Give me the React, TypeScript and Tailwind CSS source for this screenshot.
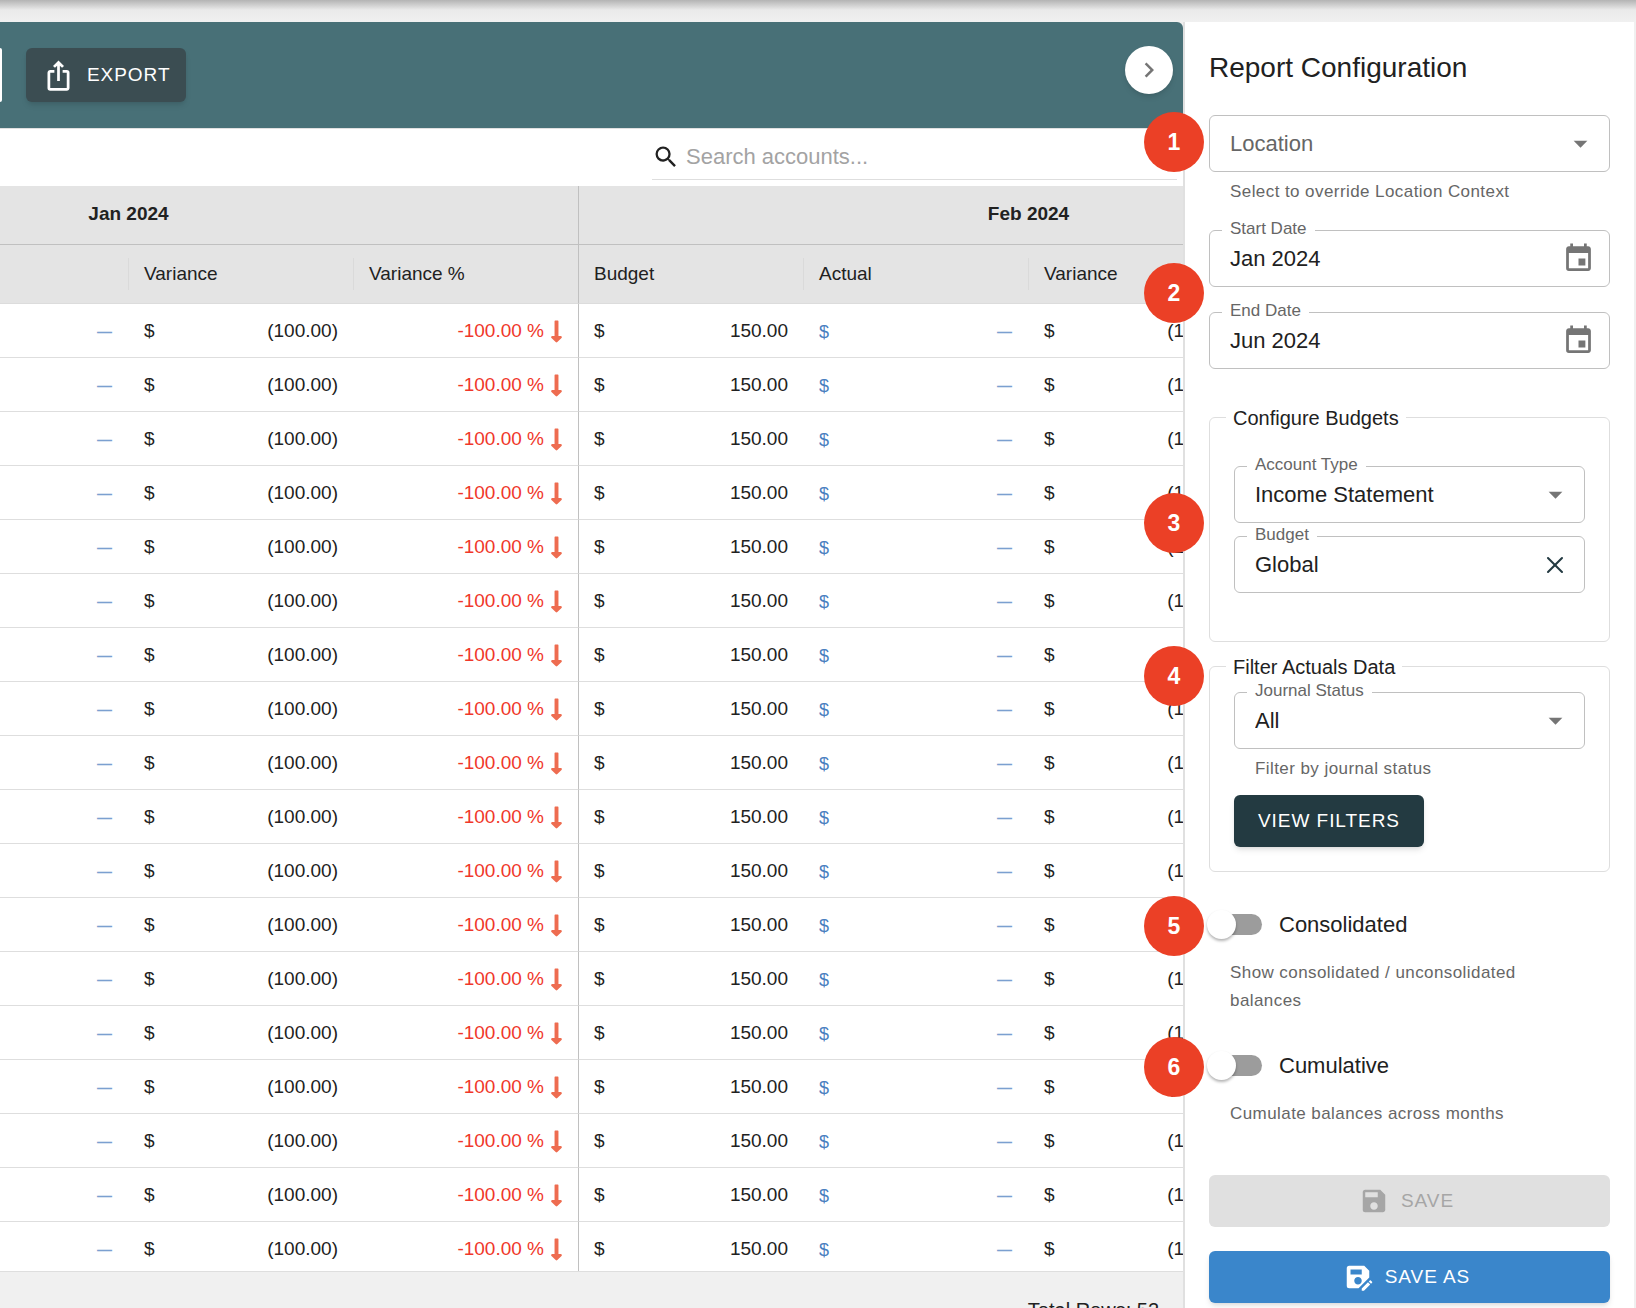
import { useState, type ReactNode } from 'react';
import { FaLongArrowAltDown } from 'react-icons/fa';
import {
  MdArrowDropDown,
  MdChevronRight,
  MdEvent,
  MdIosShare,
  MdSave,
  MdSaveAs,
  MdSearch,
} from 'react-icons/md';
import { X } from 'lucide-react';

const months = ['Jan 2024', 'Feb 2024'];
const columns = ['Budget', 'Actual', 'Variance', 'Variance %'];

const rows = Array.from({ length: 18 }, () => [
  { budget: '100.00', variance: '(100.00)', percent: '-100.00 %' },
  { budget: '150.00', variance: '(150.00)', percent: '-100.00 %' },
]);

function Money({ value }: { value: string }) {
  return (
    <div className="flex justify-between">
      <span>$</span>
      <span>{value}</span>
    </div>
  );
}

function Badge({ n, className }: { n: number; className: string }) {
  return (
    <span
      className={`absolute -left-[65px] z-10 flex size-[60px] items-center justify-center rounded-full bg-[#eb4026] text-[23px] font-bold text-white ${className}`}
    >
      {n}
    </span>
  );
}

function Outlined({ id, label, children }: { id: string; label?: string; children: ReactNode }) {
  return (
    <div className="relative flex h-[57px] items-center rounded-md border border-[#c0c0c0]">
      {label && (
        <label
          htmlFor={id}
          className="absolute -top-3 left-3 bg-white px-2 text-[17px] leading-5 text-[#666]"
        >
          {label}
        </label>
      )}
      {children}
    </div>
  );
}

function SelectField({ id, label, options, muted }: { id: string; label?: string; options: string[]; muted?: boolean }) {
  return (
    <Outlined id={id} label={label}>
      <select
        id={id}
        aria-label={label ? undefined : options[0]}
        className={`h-full w-full appearance-none bg-transparent pr-12 pl-5 text-[22px] outline-none ${
          muted ? 'text-[#666]' : 'text-[#212121]'
        }`}
      >
        {options.map((option) => (
          <option key={option}>{option}</option>
        ))}
      </select>
      <MdArrowDropDown className="pointer-events-none absolute right-3 size-[33px] text-[#757575]" />
    </Outlined>
  );
}

function DateField({ id, label, value }: { id: string; label: string; value: string }) {
  return (
    <Outlined id={id} label={label}>
      <input
        id={id}
        defaultValue={value}
        className="h-full min-w-0 flex-1 bg-transparent pl-5 text-[22px] outline-none"
      />
      <button type="button" aria-label={`Choose ${label}`} className="pr-3.5 text-[#757575]">
        <MdEvent className="size-[33px]" />
      </button>
    </Outlined>
  );
}

function Helper({ children }: { children: ReactNode }) {
  return <p className="mt-1.5 pr-10 pl-[21px] text-[17px] leading-7 tracking-wide text-[#666]">{children}</p>;
}

function Group({ title, children }: { title: string; children: ReactNode }) {
  return (
    <fieldset className="min-w-0 rounded-md border border-[#dedede]">
      <legend className="ml-4 px-[7px] pt-0.5 text-xl leading-[26px]">{title}</legend>
      {children}
    </fieldset>
  );
}

function Toggle({ id, label }: { id: string; label: string }) {
  const [on, setOn] = useState(false);

  return (
    <div className="flex h-[57px] items-center gap-[17px] pl-0.5">
      <input
        id={id}
        type="checkbox"
        role="switch"
        checked={on}
        onChange={() => setOn(!on)}
        className="relative h-[21px] w-[51px] shrink-0 appearance-none rounded-full bg-[#9c9c9c] before:absolute before:-top-1 before:-left-1 before:size-[29px] before:rounded-full before:bg-white before:shadow-[0_2px_3px_rgba(0,0,0,0.3)] checked:bg-[#3a86cb] checked:before:left-[26px]"
      />
      <label htmlFor={id} className="text-[22px]">
        {label}
      </label>
    </div>
  );
}

function ReportTable() {
  return (
    <table className="-ml-[321px] w-[1800px] table-fixed border-separate border-spacing-0 text-[19px]">
      <thead className="bg-[#e4e4e4]">
        <tr>
          {months.map((month) => (
            <th key={month} colSpan={4} className="h-[59px] border-r border-b border-[#c0c0c0] pb-0.5 font-bold">
              {month}
            </th>
          ))}
        </tr>
        <tr>
          {months.map((month) =>
            columns.map((column, i) => (
              <th
                key={month + column}
                className={`h-[59px] border-b border-b-[#dcdcdc] p-0 text-left font-normal ${
                  i === 3 ? 'border-r border-r-[#c0c0c0]' : ''
                }`}
              >
                <div
                  className={`flex h-8 items-center px-[15px] ${i === 3 ? '' : 'border-r border-[#dadada]'}`}
                >
                  {column}
                </div>
              </th>
            ))
          )}
        </tr>
      </thead>
      <tbody>
        {rows.map((row, r) => (
          <tr key={r}>
            {row.map((cell, m) => [
              <td key={`budget-${m}`} className="h-[54px] border-b border-[#dedede] pt-0.5 pr-4 pl-[15px]">
                <Money value={cell.budget} />
              </td>,
              <td key={`actual-${m}`} className="border-b border-[#dedede] pt-0.5 pr-[17px] pl-[15px]">
                <a href="#actual" className="flex items-center justify-between text-lg text-[#4a80bf]">
                  <span>$</span>
                  <span className="text-[15px] font-bold text-[#7ba0d0]">—</span>
                </a>
              </td>,
              <td key={`variance-${m}`} className="border-b border-[#dedede] pt-0.5 pr-4 pl-[15px]">
                <Money value={cell.variance} />
              </td>,
              <td
                key={`percent-${m}`}
                className="border-r border-b border-r-[#c0c0c0] border-b-[#dedede] px-[15px] pt-0.5 text-[#f0372a]"
              >
                <div className="flex items-center justify-end gap-1.5">
                  {cell.percent}
                  <FaLongArrowAltDown className="h-[25px] w-[13px] text-[#ee6c50]" />
                </div>
              </td>,
            ])}
          </tr>
        ))}
      </tbody>
    </table>
  );
}

export default function App() {
  return (
    <div className="flex h-screen flex-col overflow-hidden bg-[#f0f0f0] pr-0.5 font-['Liberation_Sans',Arial,sans-serif] text-[#212121]">
      <div className="-mr-0.5 h-[22px] shrink-0 bg-linear-to-b from-[#b4b4b4] via-[#eaeaea] via-45% to-[#f0f0f0]" />

      <div className="flex min-h-0 flex-1">
        {/* Report grid */}
        <main className="-mb-10 flex min-w-0 flex-1 flex-col">
          <div className="flex h-[106px] shrink-0 items-center rounded-tr-md bg-[#487077] pr-2.5">
            <span className="h-[54px] w-0.5 rounded-r-sm bg-white" />
            <button
              type="button"
              className="ml-6 flex h-[54px] items-center gap-3 rounded-md bg-[#3b4d52] px-4 text-[19px] tracking-wider text-white shadow-md"
            >
              <MdIosShare className="size-[33px]" />
              EXPORT
            </button>
            <button
              type="button"
              aria-label="Collapse configuration"
              className="mt-6 ml-auto flex size-12 items-center justify-center self-start rounded-full bg-white text-[#757575] shadow-md"
            >
              <MdChevronRight className="size-[30px]" />
            </button>
          </div>

          <div className="flex h-[58px] shrink-0 items-end justify-end border-t border-[#e0e0e0] bg-white pr-1.5 pb-1.5">
            <div className="flex h-[46px] w-[525px] items-center gap-1.5 border-b border-[#dedede]">
              <MdSearch className="size-7 shrink-0" />
              <input
                type="search"
                aria-label="Search accounts"
                placeholder="Search accounts..."
                className="min-w-0 flex-1 bg-transparent text-[22px] outline-none placeholder:text-[#a3a3a3]"
              />
            </div>
          </div>

          <div className="min-h-0 flex-1 overflow-hidden border-b border-[#dedede] bg-white">
            <ReportTable />
          </div>

          <footer className="flex h-[76px] shrink-0 items-center justify-end pr-6 text-xl">
            Total Rows: 52
          </footer>
        </main>

        {/* Configuration panel */}
        <aside className="w-[451px] shrink-0 border-l-2 border-[#e0e0e0] bg-white px-6 pt-7">
          <h2 className="text-[28px] leading-9">Report Configuration</h2>

          <div className="relative mt-[29px]">
            <Badge n={1} className="-top-[3px]" />
            <SelectField id="location" options={['Location']} muted />
            <Helper>Select to override Location Context</Helper>
          </div>

          <div className="relative mt-6 flex flex-col gap-[25px]">
            <Badge n={2} className="top-[33px]" />
            <DateField id="start-date" label="Start Date" value="Jan 2024" />
            <DateField id="end-date" label="End Date" value="Jun 2024" />
          </div>

          <div className="relative mt-[34px]">
            <Badge n={3} className="top-[90px]" />
            <Group title="Configure Budgets">
              <div className="flex flex-col gap-[13px] px-6 pt-[35px] pb-12">
                <SelectField id="account-type" label="Account Type" options={['Income Statement', 'Balance Sheet']} />
                <Outlined id="budget" label="Budget">
                  <input
                    id="budget"
                    defaultValue="Global"
                    className="h-full min-w-0 flex-1 bg-transparent pl-5 text-[22px] outline-none"
                  />
                  <button type="button" aria-label="Clear budget" className="pr-[15px] text-[#233a41]">
                    <X size={28} strokeWidth={1.75} />
                  </button>
                </Outlined>
              </div>
            </Group>
          </div>

          <div className="relative mt-2.5">
            <Badge n={4} className="-top-1.5" />
            <Group title="Filter Actuals Data">
              <div className="px-6 pt-3 pb-6">
                <SelectField id="journal-status" label="Journal Status" options={['All', 'Posted', 'Draft']} />
                <Helper>Filter by journal status</Helper>
                <button
                  type="button"
                  className="mt-3 h-[52px] rounded-md bg-[#233a41] px-6 text-[19px] tracking-wider text-white shadow-md"
                >
                  VIEW FILTERS
                </button>
              </div>
            </Group>
          </div>

          <div className="relative mt-6">
            <Badge n={5} className="top-0" />
            <Toggle id="consolidated" label="Consolidated" />
            <Helper>Show consolidated / unconsolidated balances</Helper>
          </div>

          <div className="relative mt-[22px]">
            <Badge n={6} className="top-0" />
            <Toggle id="cumulative" label="Cumulative" />
            <Helper>Cumulate balances across months</Helper>
          </div>

          <div className="mt-[47px] flex flex-col gap-6 text-[19px] tracking-wider">
            <button
              type="button"
              disabled
              className="flex h-[52px] items-center justify-center gap-3 rounded-md bg-[#e0e0e0] text-[#a6a6a6]"
            >
              <MdSave className="-ml-1.5 size-[30px]" />
              SAVE
            </button>
            <button
              type="button"
              className="flex h-[52px] items-center justify-center gap-3 rounded-md bg-[#3a86cb] text-white shadow-md"
            >
              <MdSaveAs className="-ml-1.5 size-[30px]" />
              SAVE AS
            </button>
          </div>
        </aside>
      </div>
    </div>
  );
}
